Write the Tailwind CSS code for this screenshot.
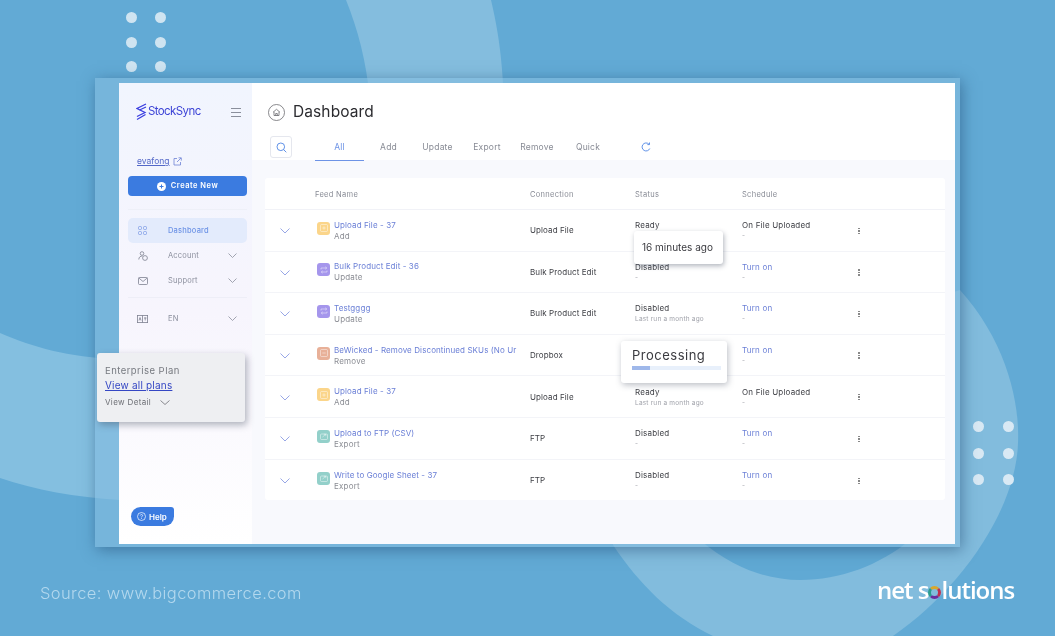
<!DOCTYPE html>
<html lang="en">
<head>
<meta charset="UTF-8" />
<title>StockSync Dashboard</title>
<script src="https://cdn.jsdelivr.net/npm/@tailwindcss/browser@4"></script>
</head>
<body class="m-0">
<div class="relative w-[1055px] h-[636px] overflow-hidden bg-[#62aad5] font-['Inter',sans-serif] blur-[0.3px]">
  <!-- background shapes -->
  <svg class="absolute inset-0" width="1055" height="636" viewBox="0 0 1055 636">
    <path d="M346 0 L491 0 C498 30 502 55 504 100 L370 100 C366 60 358 30 346 0 Z" fill="#84bdde"/>
    <path d="M0 333 C35 348 65 356 120 360 L120 500 C75 497 35 490 0 478 Z" fill="#84bfe0"/>
    <path d="M960 290 C1005 340 1020 400 1018 443 C1016 510 960 590 893 636 L713 636 C670 615 640 585 613 545 L613 400 Z" fill="#82bcdd"/>
    <path d="M700 540 C735 570 770 580 800 580 C840 580 880 565 910 540 Z" fill="#60a9d4"/>
  </svg>

  <!-- decorative dots -->
  <div class="absolute left-[126px] top-[12px] grid grid-cols-[11px_11px] gap-x-[18px] gap-y-[13.5px]">
    <span class="w-[11px] h-[11px] rounded-full bg-[#cfe4f1]"></span><span class="w-[11px] h-[11px] rounded-full bg-[#cfe4f1]"></span>
    <span class="w-[11px] h-[11px] rounded-full bg-[#cfe4f1]"></span><span class="w-[11px] h-[11px] rounded-full bg-[#cfe4f1]"></span>
    <span class="w-[11px] h-[11px] rounded-full bg-[#cfe4f1]"></span><span class="w-[11px] h-[11px] rounded-full bg-[#cfe4f1]"></span>
  </div>
  <div class="absolute left-[973px] top-[421px] grid grid-cols-[11px_11px] gap-x-[19px] gap-y-[15.5px]">
    <span class="w-[11px] h-[11px] rounded-full bg-[#d9e9f4]"></span><span class="w-[11px] h-[11px] rounded-full bg-[#d9e9f4]"></span>
    <span class="w-[11px] h-[11px] rounded-full bg-[#d9e9f4]"></span><span class="w-[11px] h-[11px] rounded-full bg-[#d9e9f4]"></span>
    <span class="w-[11px] h-[11px] rounded-full bg-[#d9e9f4]"></span><span class="w-[11px] h-[11px] rounded-full bg-[#d9e9f4]"></span>
  </div>

  <!-- app frame -->
  <div class="absolute left-[95px] top-[78px] w-[865px] h-[469px] bg-[#84bde0]/60 pl-[24px] pr-[5px] pt-[5px] pb-[3px] shadow-[2px_3px_14px_rgba(30,70,110,0.5)]">
    <div class="flex h-full bg-white">
      <!-- sidebar -->
      <aside class="relative w-[133px] h-full shrink-0 bg-gradient-to-b from-[#f1f5fe] via-[#f7f5fd] to-white">
        <div class="flex items-center justify-between h-[18px] pl-[17px] pr-[11px] mt-[20px]">
          <div class="flex items-center gap-[1px]">
            <svg width="11" height="18" viewBox="0 0 11 18" fill="none" stroke="#3b3fe0" stroke-width="1.3">
              <path d="M10 1L1 5.5L9 9.5L1 13.5"/><path d="M10 4L3.5 7"/><path d="M10 7.5L1.5 3.5" opacity="0"/><path d="M9.5 11.5L1 16.5"/>
            </svg>
            <span class="text-[11.5px] leading-none tracking-[-0.6px] text-[#3d44d6]">StockSync</span>
          </div>
          <svg width="10" height="9" viewBox="0 0 10 9" stroke="#8a8f9c" stroke-width="1"><path d="M0 .5H10M0 4.5H10M0 8.5H10"/></svg>
        </div>
        <div class="flex items-center gap-[3px] pl-[18px] mt-[34px] text-[8.5px] leading-[12px] text-[#5468c8] underline">evafong
          <svg width="9" height="9" viewBox="0 0 9 9" fill="none" stroke="#6f83d6" stroke-width=".8"><path d="M4 1.5H1V8H7.5V5M4 5L8 1M5.5 .8H8.3V3.6"/></svg>
        </div>
        <div class="ml-[9px] mr-[5px] mt-[9px] h-[20px] rounded-[4px] bg-[#3b7be0] flex items-center justify-center gap-[5px] text-white text-[7.5px] font-semibold tracking-[0.5px]">
          <svg width="9" height="9" viewBox="0 0 9 9"><circle cx="4.5" cy="4.5" r="4.5" fill="#fff"/><path d="M4.5 2.5V6.5M2.5 4.5H6.5" stroke="#3b7be0" stroke-width="1"/></svg>
          Create New
        </div>
        <div class="ml-[9px] mr-[5px] mt-[13px] border-t border-[#eef0f8]"></div>
        <nav class="mt-[8px] ml-[9px] mr-[5px] text-[7.5px] tracking-[0.2px]">
          <div class="flex items-center h-[25px] rounded-[5px] bg-[#e3ebfc] text-[#6d93e6] font-medium pl-[10px]">
            <svg class="w-[9px]" width="9" height="9" viewBox="0 0 9 9" fill="none" stroke="#7c9be6" stroke-width=".8"><rect x=".5" y=".5" width="3" height="3" rx="1"/><rect x="5.5" y=".5" width="3" height="3" rx="1"/><rect x=".5" y="5.5" width="3" height="3" rx="1"/><rect x="5.5" y="5.5" width="3" height="3" rx="1"/></svg>
            <span class="ml-[21px]">Dashboard</span>
          </div>
          <div class="flex items-center h-[25px] text-[#8b8f9d] pl-[10px] pr-[10px]">
            <svg width="10" height="10" viewBox="0 0 10 10" fill="none" stroke="#7d8190" stroke-width=".8"><circle cx="4" cy="2.5" r="1.8"/><path d="M.8 8.5C.8 6 2.5 5 4.5 5"/><circle cx="7" cy="7" r="2.4"/></svg>
            <span class="ml-[20px]">Account</span>
            <svg class="ml-auto" width="9" height="5" viewBox="0 0 9 5" fill="none" stroke="#8b8f9d" stroke-width=".8"><path d="M.5 .5L4.5 4.5L8.5 .5"/></svg>
          </div>
          <div class="flex items-center h-[25px] text-[#8b8f9d] pl-[10px] pr-[10px]">
            <svg width="10" height="8" viewBox="0 0 10 8" fill="none" stroke="#7d8190" stroke-width=".8"><rect x=".5" y=".5" width="9" height="7" rx="1"/><path d="M.8 1L5 4.5L9.2 1"/></svg>
            <span class="ml-[20px]">Support</span>
            <svg class="ml-auto" width="9" height="5" viewBox="0 0 9 5" fill="none" stroke="#8b8f9d" stroke-width=".8"><path d="M.5 .5L4.5 4.5L8.5 .5"/></svg>
          </div>
        </nav>
        <div class="ml-[9px] mr-[5px] mt-[4px] border-t border-[#eeeef7]"></div>
        <div class="flex items-center h-[25px] mt-[8px] ml-[9px] mr-[5px] pl-[9px] pr-[10px] text-[7.5px] text-[#8b8f9d] tracking-[0.2px]">
          <svg width="11" height="8" viewBox="0 0 11 8" fill="none" stroke="#7d8190" stroke-width=".8"><rect x=".4" y=".4" width="10.2" height="7.2"/><path d="M5.5 .4V7.6M2 5.5L3 2.5L4 5.5M7 3H9.5M8.2 2.5V5.5"/></svg>
          <span class="ml-[20px]">EN</span>
          <svg class="ml-auto" width="9" height="5" viewBox="0 0 9 5" fill="none" stroke="#8b8f9d" stroke-width=".8"><path d="M.5 .5L4.5 4.5L8.5 .5"/></svg>
        </div>
        <div class="absolute left-[12px] bottom-[18px] w-[43px] h-[19px] bg-[#3b7be0] rounded-[9.5px] rounded-tr-[3px] flex items-center gap-[3px] pl-[6px] text-white text-[8px] font-semibold">
          <svg width="9" height="9" viewBox="0 0 9 9" fill="none" stroke="#fff" stroke-width=".7"><circle cx="4.5" cy="4.5" r="4"/><path d="M3.3 3.5C3.4 2 5.8 2.2 5.6 3.6C5.5 4.4 4.5 4.4 4.5 5.4M4.5 6.2V7"/></svg>
          Help
        </div>
      </aside>

      <!-- main -->
      <main class="flex-1 bg-[#f8f9fd]">
        <header class="bg-white h-[77px] pl-[16px]">
          <div class="flex items-center gap-[8px] pt-[20px]">
            <svg width="17" height="17" viewBox="0 0 17 17" fill="none" stroke="#6b6b70" stroke-width=".8"><circle cx="8.5" cy="8.5" r="8"/><path d="M5 8.3L8.5 5.3L12 8.3M6 7.8V11.5H11V7.8M7.7 11.5V9.5H9.3V11.5"/></svg>
            <h1 class="text-[15.5px] leading-[18px] text-[#2b2b2f] tracking-[0.1px]">Dashboard</h1>
          </div>
          <div class="flex mt-[15px] ml-[2px] h-[29px]">
            <div class="w-[22px] h-[22px] border border-[#e5e7ee] rounded-[3px] flex items-center justify-center">
              <svg width="11" height="11" viewBox="0 0 11 11" fill="none" stroke="#4f86e4" stroke-width=".9"><circle cx="4.8" cy="4.8" r="3.8"/><path d="M7.6 7.6L10.3 10.3"/></svg>
            </div>
            <div class="flex ml-[23px] text-[8.5px] tracking-[0.2px] text-[#888b95]">
              <span class="w-[49px] h-[25px] pt-[5px] text-center text-[#6d93e6] border-b border-[#6d93e6]">All</span>
              <span class="w-[49px] pt-[5px] text-center">Add</span>
              <span class="w-[49px] pt-[5px] text-center">Update</span>
              <span class="w-[50px] pt-[5px] text-center">Export</span>
              <span class="w-[50px] pt-[5px] text-center">Remove</span>
              <span class="w-[52px] pt-[5px] text-center">Quick</span>
            </div>
            <svg class="ml-[27px] mt-[6px]" width="10" height="10" viewBox="0 0 10 10" fill="none" stroke="#4f86e4" stroke-width=".9"><path d="M8.8 6.5A4 4 0 1 1 7.8 2M8.5 .5V2.6H6.4"/></svg>
          </div>
        </header>

        <section id="feed-table" class="mt-[18px] ml-[13px] w-[680px] h-[322px] bg-white rounded-[3px]">
          <div class="grid grid-cols-[50px_215px_105px_107px_1fr] items-center h-[32px] pt-[3px] border-b border-[#f1f2f7] text-[7.5px] tracking-[0.3px] text-[#888b95]">
            <span></span><span>Feed Name</span><span>Connection</span><span>Status</span><span>Schedule</span>
          </div>
          <div id="rows"></div>
        </section>
      </main>
    </div>
  </div>

  <!-- enterprise card over the sidebar -->
  <div class="absolute left-[97px] top-[353px] w-[148px] h-[69px] rounded-[3px] bg-[#eeeff2] pl-[8px] pt-[11px] shadow-[2px_3px_7px_rgba(60,70,90,0.4)]">
    <p class="text-[9.5px] leading-[13px] text-[#777a80] tracking-[0.45px]">Enterprise Plan</p>
    <p class="text-[10px] leading-[17px] text-[#3547c4] underline tracking-[0.2px]">View all plans</p>
    <p class="flex items-center gap-[9px] mt-[3px] text-[8px] leading-[11px] text-[#6e7076] tracking-[0.35px]">View Detail
      <svg width="10" height="5" viewBox="0 0 10 5" fill="none" stroke="#6e7076" stroke-width=".8"><path d="M.5 .5L5 4.5L9.5 .5"/></svg>
    </p>
  </div>

  <!-- tooltips -->
  <div class="absolute left-[634px] top-[231px] w-[89px] h-[33px] rounded-[3px] bg-white shadow-[1px_2px_5px_rgba(60,70,90,0.4)] pl-[8px] pt-[10px] text-[10px] leading-[13px] text-[#3a3a3f]">16 minutes ago</div>
  <div class="absolute left-[621px] top-[341px] w-[106px] h-[42px] rounded-[3px] bg-white shadow-[1px_2px_6px_rgba(60,70,90,0.35)] pl-[11px] pt-[6px]">
    <p class="text-[13px] leading-[16px] text-[#3a3a3f] tracking-[0.5px]">Processing</p>
    <div class="mt-[3px] w-[89px] h-[4px] bg-[#e8f0fb]"><div class="h-full bg-[#9fb8ea]" style="width:20%"></div></div>
  </div>

  <!-- footer -->
  <p class="absolute left-[40px] top-[583px] text-[16.5px] leading-[20px] font-light text-[#b3d8ee] tracking-[0.4px]">Source: www.bigcommerce.com</p>
  <div class="absolute left-[877px] top-[575px] flex items-center text-[24px] leading-[30px] font-semibold text-white tracking-[-1px] font-['Open_Sans',sans-serif]">
    <span>net s</span><span class="w-[13px] h-[13px] mt-[4px] rounded-full border-[3px] border-t-[#d9a72c] border-r-[#c0304f] border-b-[#6a2c9e] border-l-[#2a9d8f]"></span><span>lutions</span>
  </div>
</div>

<script>
  // glyph inside the coloured tile, one per feed type
  const glyphs = {
    Add: '<rect x=".5" y=".5" width="7" height="7" rx="1"/><path d="M4 2.3V5.7M2.3 4H5.7"/>',
    Update: '<path d="M1 3.5V2H6.5M5.3 .8L6.8 2L5.3 3.2M7 4.5V6H1.5M2.7 4.8L1.2 6L2.7 7.2"/>',
    Remove: '<rect x=".5" y=".5" width="7" height="7" rx="1"/><path d="M2.3 4H5.7"/>',
    Export: '<rect x=".5" y="2" width="7" height="5.5" rx="1"/><path d="M2.5 5L5.5 2.5M3.8 2.3H5.8V4.2"/>'
  };

  const rows = [
    { name: "Upload File - 37", type: "Add", color: "bg-[#fbd58a]", conn: "Upload File", status: "Ready", last: "-", sched: "On File Uploaded", link: false },
    { name: "Bulk Product Edit - 36", type: "Update", color: "bg-[#a596ec]", conn: "Bulk Product Edit", status: "Disabled", last: "-", sched: "Turn on", link: true },
    { name: "Testgggg", type: "Update", color: "bg-[#a596ec]", conn: "Bulk Product Edit", status: "Disabled", last: "Last run a month ago", sched: "Turn on", link: true },
    { name: "BeWicked - Remove Discontinued SKUs (No Ur", type: "Remove", color: "bg-[#e8b098]", conn: "Dropbox", status: "", last: "", sched: "Turn on", link: true },
    { name: "Upload File - 37", type: "Add", color: "bg-[#fbd58a]", conn: "Upload File", status: "Ready", last: "Last run a month ago", sched: "On File Uploaded", link: false },
    { name: "Upload to FTP (CSV)", type: "Export", color: "bg-[#93d0ca]", conn: "FTP", status: "Disabled", last: "-", sched: "Turn on", link: true },
    { name: "Write to Google Sheet - 37", type: "Export", color: "bg-[#93d0ca]", conn: "FTP", status: "Disabled", last: "-", sched: "Turn on", link: true }
  ];

  const container = document.getElementById("rows");
  rows.forEach((row) => {
    const el = document.createElement("div");
    el.className = "grid grid-cols-[50px_215px_105px_107px_116px_1fr] items-center h-[41.6px] border-b border-[#f3f4f8] last:border-b-0";
    const schedClass = row.link ? "text-[#6a7fd6]" : "text-[#3f4046]";
    el.innerHTML = `
      <div class="pl-[15px] pt-[2px]"><svg width="10" height="6" viewBox="0 0 10 6" fill="none" stroke="#7d90e0" stroke-width=".8"><path d="M.5 .5L5 5L9.5 .5"/></svg></div>
      <div class="flex items-start gap-[4px] min-w-0 pl-[2px]">
        <div class="w-[13px] h-[13px] rounded-[3px] shrink-0 mt-[3px] ${row.color} flex items-center justify-center">
          <svg width="8" height="8" viewBox="0 0 8 8" fill="none" stroke="#fff" stroke-opacity=".75" stroke-width=".6">${glyphs[row.type]}</svg>
        </div>
        <div class="min-w-0 pt-[1px]">
          <div class="text-[8px] leading-[11px] tracking-[0.1px] text-[#6a7fd6] whitespace-nowrap">${row.name}</div>
          <div class="text-[8px] leading-[11px] tracking-[0.2px] text-[#8b8d94]">${row.type}</div>
        </div>
      </div>
      <div class="text-[8px] tracking-[0.1px] text-[#3f4046]">${row.conn}</div>
      <div class="pt-[1px]">
        <div class="text-[8px] leading-[11px] tracking-[0.2px] text-[#3f4046]">${row.status}</div>
        <div class="text-[6.5px] leading-[10px] tracking-[0.2px] text-[#a0a2aa]">${row.last}</div>
      </div>
      <div class="pt-[1px]">
        <div class="text-[8px] leading-[11px] tracking-[0.2px] ${schedClass}">${row.sched}</div>
        <div class="text-[6.5px] leading-[10px] text-[#a0a2aa]">-</div>
      </div>
      <div class="flex flex-col gap-[1px] pt-[1px]"><span class="w-[1.5px] h-[1.5px] bg-[#888]"></span><span class="w-[1.5px] h-[1.5px] bg-[#888]"></span><span class="w-[1.5px] h-[1.5px] bg-[#888]"></span></div>
    `;
    container.appendChild(el);
  });
</script>
</body>
</html>
